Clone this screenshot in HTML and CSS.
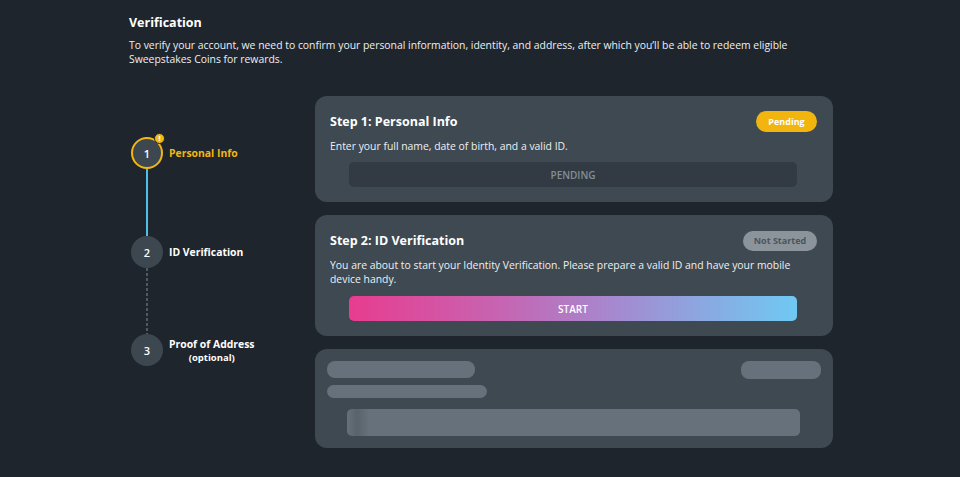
FILE: index.html
```html
<!DOCTYPE html>
<html>
<head>
<meta charset="utf-8">
<link rel="stylesheet" href="styles.css">
</head>
<body>
<main class="page">
  <h1 class="title">Verification</h1>
  <p class="intro">To verify your account, we need to confirm your personal information, identity, and address, after which you’ll be able to redeem eligible Sweepstakes Coins for rewards.</p>
  <div class="layout">
    <ol class="stepper">
      <li class="step active">
        <span class="dot">1<span class="badge">!</span></span>
        <span class="label">Personal Info</span>
      </li>
      <li class="link done"></li>
      <li class="step">
        <span class="dot">2</span>
        <span class="label">ID Verification</span>
      </li>
      <li class="link dashed"></li>
      <li class="step">
        <span class="dot">3</span>
        <span class="label multi">Proof of Address<br><span class="sub">(optional)</span></span>
      </li>
    </ol>
    <div class="cards">
      <section class="card">
        <div class="card-head">
          <h2>Step 1: Personal Info</h2>
          <span class="pill pending">Pending</span>
        </div>
        <p class="card-text">Enter your full name, date of birth, and a valid ID.</p>
        <button class="btn disabled">PENDING</button>
      </section>
      <section class="card">
        <div class="card-head">
          <h2>Step 2: ID Verification</h2>
          <span class="pill idle">Not Started</span>
        </div>
        <p class="card-text">You are about to start your Identity Verification. Please prepare a valid ID and have your mobile device handy.</p>
        <button class="btn gradient">START</button>
      </section>
      <section class="card skeleton">
        <div class="sk-head">
          <span class="sk sk-title"></span>
          <span class="sk sk-pill"></span>
        </div>
        <span class="sk sk-line"></span>
        <span class="sk sk-btn"></span>
      </section>
    </div>
  </div>
</main>
</body>
</html>
```

FILE: styles.css
```css
* { box-sizing: border-box; }
html, body {
  margin: 0;
  background: #1f252c;
  color: #ffffff;
  font-family: "Open Sans", "DejaVu Sans", sans-serif;
  height: 100%;
}
.page {
  padding: 14px 0 0 129px;
  width: 834px;
}
.title {
  font-size: 12.5px;
  font-weight: 700;
  margin: 0;
  line-height: 18px;
}
.intro {
  margin: 6px 0 0;
  font-size: 10.4px;
  line-height: 14px;
  color: #eef0f2;
  width: 670px;
}
.layout {
  display: flex;
  margin-top: 30px;
}
.stepper {
  list-style: none;
  margin: 0;
  padding: 41px 0 0 2px;
  width: 186px;
  display: flex;
  flex-direction: column;
}
.step {
  display: flex;
  align-items: center;
  gap: 6px;
  height: 32px;
}
.dot {
  position: relative;
  width: 32px;
  height: 32px;
  border-radius: 50%;
  background: #3d4750;
  display: flex;
  align-items: center;
  justify-content: center;
  font-size: 11px;
  font-weight: 600;
  flex: none;
}
.active .dot {
  border: 2px solid #f2b711;
}
.badge {
  position: absolute;
  top: -6px;
  right: -4px;
  width: 11px;
  height: 11px;
  border-radius: 50%;
  background: #f2b711;
  border: 1px solid #1f252c;
  color: #fff;
  font-size: 7px;
  font-weight: 800;
  line-height: 9px;
  text-align: center;
}
.label {
  font-size: 10.4px;
  font-weight: 700;
  line-height: 13px;
}
.active .label { color: #f2b711; }
.label.multi { text-align: center; margin-top: 2px; }
.sub { font-size: 9.5px; }
.link {
  width: 2px;
  height: 67px;
  margin-left: 15px;
}
.link.done { background: #4ec0e6; }
.link.dashed {
  height: 66px;
  background: repeating-linear-gradient(to bottom, #4f5a64 0 3px, transparent 3px 5px);
}
.cards {
  display: flex;
  flex-direction: column;
  gap: 13px;
  width: 518px;
}
.card {
  background: #3e4952;
  border-radius: 12px;
  padding: 15px 16px 15px 15px;
}
.card-head {
  display: flex;
  justify-content: space-between;
  align-items: center;
  height: 21px;
}
.card-head h2 {
  margin: 0;
  font-size: 12.5px;
  font-weight: 700;
}
.pill {
  height: 21px;
  border-radius: 11px;
  font-size: 9px;
  font-weight: 700;
  display: flex;
  align-items: center;
  justify-content: center;
}
.pill.pending { background: #f2b50e; color: #fff; width: 61px; }
.pill.idle { background: #8c949b; color: #4b545c; width: 74px; height: 20px; }
.card-text {
  margin: 7px 0 0;
  font-size: 10.4px;
  line-height: 14px;
  color: #eef0f2;
}
.btn {
  display: block;
  margin: 9px 0 0 19px;
  width: 448px;
  height: 25px;
  border: 0;
  border-radius: 5px;
  font-family: inherit;
  font-size: 10px;
  font-weight: 600;
}
.btn.disabled { background: #323b44; color: #858e97; }
.btn.gradient {
  background: linear-gradient(90deg, #e83c8f 0%, #c566b3 35%, #a48ad0 60%, #6fc9f3 100%);
  color: #fff;
  margin-top: 10px;
}
.card.skeleton {
  padding: 12px 12px 12px 12px;
  display: flex;
  flex-direction: column;
}
.sk { display: block; background: #66717b; border-radius: 8px; }
.sk-head { display: flex; justify-content: space-between; }
.sk-title { width: 148px; height: 17px; }
.sk-pill { width: 80px; height: 18px; }
.sk-line { width: 160px; height: 13px; margin-top: 6px; border-radius: 7px; }
.sk-btn {
  width: 453px;
  height: 27px;
  margin: 11px 0 0 20px;
  border-radius: 5px;
  background: linear-gradient(90deg, #66717b 0, #58636c 10px, #66717b 22px, #66717b 100%);
}
```
